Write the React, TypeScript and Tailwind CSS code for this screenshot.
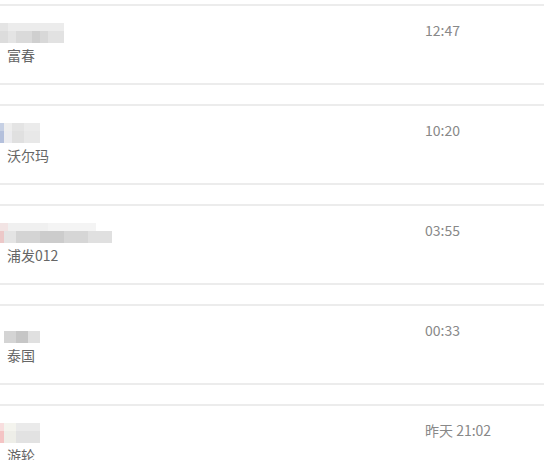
type Cell = { w: string; c: string }

interface ChatItem {
  top: Cell[]
  bottom: Cell[]
  sub: string
  time: string
}

const items: ChatItem[] = [
  {
    top: [
      { w: "w-[8px]", c: "bg-[#e4e4e4]" },
      { w: "w-[56px]", c: "bg-[#ececec]" },
    ],
    bottom: [
      { w: "w-[8px]", c: "bg-[#dcdcdc]" },
      { w: "w-[8px]", c: "bg-[#e4e4e4]" },
      { w: "w-[16px]", c: "bg-[#dadada]" },
      { w: "w-[8px]", c: "bg-[#cfcfcf]" },
      { w: "w-[8px]", c: "bg-[#d8d8d8]" },
      { w: "w-[16px]", c: "bg-[#e2e2e2]" },
    ],
    sub: "富春",
    time: "12:47",
  },
  {
    top: [
      { w: "w-[4px]", c: "bg-[#c6d0e4]" },
      { w: "w-[8px]", c: "bg-[#eeeeee]" },
      { w: "w-[12px]", c: "bg-[#e4e4e4]" },
      { w: "w-[16px]", c: "bg-[#ebebeb]" },
    ],
    bottom: [
      { w: "w-[4px]", c: "bg-[#b4c0dc]" },
      { w: "w-[8px]", c: "bg-[#ececef]" },
      { w: "w-[12px]", c: "bg-[#e0e0e0]" },
      { w: "w-[16px]", c: "bg-[#e8e8e8]" },
    ],
    sub: "沃尔玛",
    time: "10:20",
  },
  {
    top: [
      { w: "w-[8px]", c: "bg-[#f2e4e4]" },
      { w: "w-[40px]", c: "bg-[#f0f0f0]" },
      { w: "w-[48px]", c: "bg-[#f4f4f4]" },
    ],
    bottom: [
      { w: "w-[4px]", c: "bg-[#ecc8c8]" },
      { w: "w-[12px]", c: "bg-[#e4e4e4]" },
      { w: "w-[24px]", c: "bg-[#d4d4d4]" },
      { w: "w-[24px]", c: "bg-[#cccccc]" },
      { w: "w-[24px]", c: "bg-[#d6d6d6]" },
      { w: "w-[24px]", c: "bg-[#e0e0e0]" },
    ],
    sub: "浦发012",
    time: "03:55",
  },
  {
    top: [{ w: "w-[40px]", c: "bg-white" }],
    bottom: [
      { w: "w-[4px]", c: "bg-white" },
      { w: "w-[12px]", c: "bg-[#d4d4d4]" },
      { w: "w-[12px]", c: "bg-[#c6c6c6]" },
      { w: "w-[12px]", c: "bg-[#e0e0e0]" },
    ],
    sub: "泰国",
    time: "00:33",
  },
  {
    top: [
      { w: "w-[4px]", c: "bg-[#f8dede]" },
      { w: "w-[12px]", c: "bg-[#f4f4ee]" },
      { w: "w-[24px]", c: "bg-[#eaeaea]" },
    ],
    bottom: [
      { w: "w-[4px]", c: "bg-[#f4c4c4]" },
      { w: "w-[12px]", c: "bg-[#eeeee8]" },
      { w: "w-[24px]", c: "bg-[#e2e2e2]" },
    ],
    sub: "游轮",
    time: "昨天 21:02",
  },
]

function Blur({ top, bottom }: { top: Cell[]; bottom: Cell[] }) {
  return (
    <div className="flex flex-col">
      <div className="flex h-[8px]">
        {top.map((cell, i) => (
          <div key={i} className={`${cell.w} ${cell.c} h-full`} />
        ))}
      </div>
      <div className="flex h-[12px]">
        {bottom.map((cell, i) => (
          <div key={i} className={`${cell.w} ${cell.c} h-full`} />
        ))}
      </div>
    </div>
  )
}

export default function App() {
  return (
    <div
      className="w-[544px] h-[460px] overflow-hidden bg-white"
      style={{ fontFamily: '"Noto Sans CJK SC", "Liberation Sans", sans-serif' }}
    >
      {items.map((item, i) => (
        <div key={i} className="h-[100px] pt-[4px]">
          <div className="h-[81px] border-y-2 border-[#ececec] flex">
            <div className="w-[425px] pt-[17px]">
              <Blur top={item.top} bottom={item.bottom} />
              <div className="pl-[7px] pt-[2px] text-[14px] leading-[20px] text-[#666]">
                {item.sub}
              </div>
            </div>
            <div className="pt-[14px] text-[14px] leading-[20px] text-[#888]">
              {item.time}
            </div>
          </div>
        </div>
      ))}
    </div>
  )
}
